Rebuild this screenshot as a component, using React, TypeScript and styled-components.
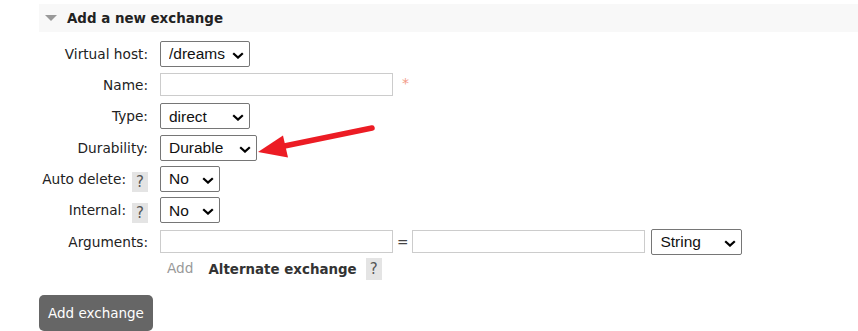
import styled, { createGlobalStyle } from 'styled-components';

const GlobalStyle = createGlobalStyle`
  body {
    margin: 0;
    background: #fff;
    font-family: "DejaVu Sans", Verdana, sans-serif;
    color: #222;
  }
`;

const Page = styled.div`
  width: 858px;
  height: 331px;
  overflow: hidden;
  padding-top: 4px;
  box-sizing: border-box;
  position: relative;
`;

const Header = styled.div`
  margin-left: 39px;
  height: 28px;
  background: #f8f8f8;
  display: flex;
  align-items: center;
  gap: 10px;
  padding-left: 6px;
`;

const Triangle = styled.span`
  width: 0;
  height: 0;
  border-left: 6px solid transparent;
  border-right: 6px solid transparent;
  border-top: 6px solid #999;
`;

const Title = styled.h2`
  margin: 0;
  font-size: 13.4px;
  font-weight: bold;
  color: #222;
`;

const Form = styled.div`
  display: grid;
  grid-template-columns: 148px auto;
  column-gap: 12px;
  grid-auto-rows: 31.33px;
  margin-top: 6px;
  align-items: center;
`;

const Label = styled.label`
  justify-self: end;
  display: flex;
  align-items: center;
  gap: 6px;
  font-size: 13.7px;
  color: #222;
`;

const Help = styled.span<{ $tall?: boolean }>`
  display: inline-flex;
  align-items: center;
  justify-content: center;
  width: 16px;
  height: ${(p) => (p.$tall ? 22 : 20)}px;
  margin-top: ${(p) => (p.$tall ? 0 : 6)}px;
  background: #e4e4e4;
  color: #555;
  font-size: 15px;
`;

const Controls = styled.div`
  display: flex;
  align-items: center;
  gap: 6px;
`;

const SelectWrap = styled.span`
  position: relative;
  display: inline-flex;
`;

const Select = styled.select<{ $w: number }>`
  appearance: none;
  width: ${(p) => p.$w}px;
  height: 26px;
  font-family: "Liberation Sans", Arial, sans-serif;
  font-size: 15.5px;
  color: #111;
  border: 1px solid #767676;
  border-radius: 2px;
  background: #fff;
  padding: 0 4px 0 8px;
`;

const Chevron = styled.svg`
  position: absolute;
  right: 6px;
  top: 11px;
  pointer-events: none;
`;

const Input = styled.input<{ $w: number }>`
  width: ${(p) => p.$w}px;
  height: 23px;
  box-sizing: border-box;
  border: 1px solid #ccc;
  padding: 0 4px;
  font-size: 13px;
`;

const Star = styled.span`
  color: #f29a87;
  font-size: 14px;
  margin-left: 3px;
  margin-top: -4px;
`;

const Eq = styled.span`
  font-size: 13.7px;
  color: #444;
  margin: 0 -2px;
`;

const ExtraRow = styled.div`
  grid-column: 2;
  display: flex;
  align-items: center;
  padding-left: 7px;
  margin-top: -7px;
`;

const AddLink = styled.span`
  color: #999;
  font-size: 13.7px;
  margin-right: 15px;
  margin-top: -3px;
`;

const Strong = styled.span`
  font-weight: bold;
  font-size: 13.4px;
  color: #333;
  margin-right: 9px;
`;

const Button = styled.button`
  margin-left: 39px;
  margin-top: 6px;
  height: 36px;
  padding: 0 9px;
  background: #666;
  color: #fff;
  border: none;
  border-radius: 5px;
  font-family: "DejaVu Sans", Verdana, sans-serif;
  font-size: 13.5px;
`;

const Arrow = styled.svg`
  position: absolute;
  left: 0;
  top: 0;
  pointer-events: none;
`;

function Dropdown({ w, value }: { w: number; value: string }) {
  return (
    <SelectWrap>
      <Select $w={w} defaultValue={value}>
        <option>{value}</option>
      </Select>
      <Chevron width="12" height="7" viewBox="0 0 12 7">
        <path d="M1.2 1.2 L6 5.6 L10.8 1.2" fill="none" stroke="#000" strokeWidth="2.2" />
      </Chevron>
    </SelectWrap>
  );
}

export default function App() {
  return (
    <>
      <GlobalStyle />
      <Page>
        <Header>
          <Triangle />
          <Title>Add a new exchange</Title>
        </Header>
        <Form>
          <Label>Virtual host:</Label>
          <Controls>
            <Dropdown w={90} value="/dreams" />
          </Controls>

          <Label>Name:</Label>
          <Controls>
            <Input $w={233} />
            <Star>*</Star>
          </Controls>

          <Label>Type:</Label>
          <Controls>
            <Dropdown w={90} value="direct" />
          </Controls>

          <Label>Durability:</Label>
          <Controls>
            <Dropdown w={97} value="Durable" />
          </Controls>

          <Label>
            Auto delete: <Help>?</Help>
          </Label>
          <Controls>
            <Dropdown w={60} value="No" />
          </Controls>

          <Label>
            Internal: <Help>?</Help>
          </Label>
          <Controls>
            <Dropdown w={60} value="No" />
          </Controls>

          <Label>Arguments:</Label>
          <Controls>
            <Input $w={233} />
            <Eq>=</Eq>
            <Input $w={233} />
            <Dropdown w={91} value="String" />
          </Controls>

          <ExtraRow>
            <AddLink>Add</AddLink>
            <Strong>Alternate exchange</Strong>
            <Help $tall>?</Help>
          </ExtraRow>
        </Form>
        <Button>Add exchange</Button>
        <Arrow width="858" height="331" viewBox="0 0 858 331">
          <line x1="372" y1="128" x2="282" y2="146.5" stroke="#ec1c24" strokeWidth="5.5" strokeLinecap="round" />
          <polygon points="258,152 283,135.5 288,157.5" fill="#ec1c24" />
        </Arrow>
      </Page>
    </>
  );
}
